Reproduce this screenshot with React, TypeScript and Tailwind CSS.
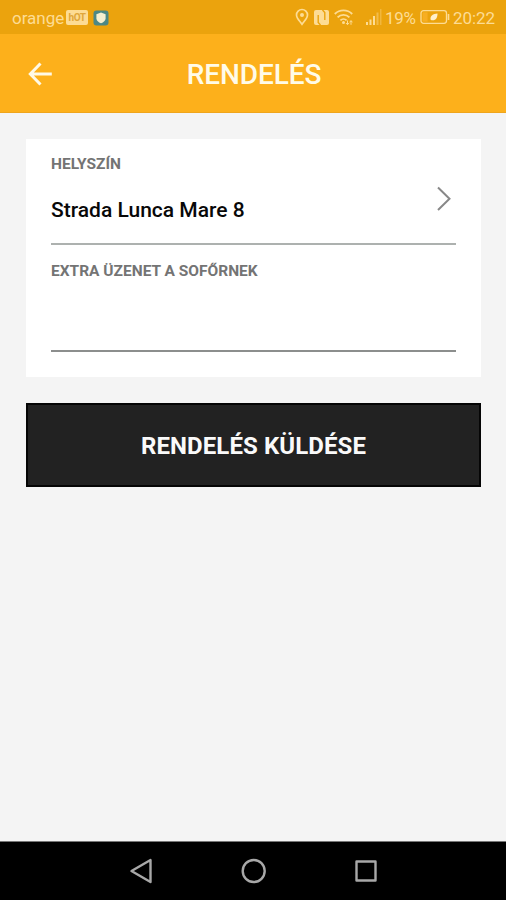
import type { ReactNode } from 'react';
import clsx from 'clsx';

function StatusBar() {
  return (
    <div className="flex h-[34px] items-center bg-[#eba30d] pl-3 pr-[11px] text-[17px] leading-[34px] text-[#fddc94]">
      <span className="w-[52px] pt-[2px]">orange</span>
      {/* carrier badge */}
      <span className="ml-[2px] mt-px flex h-[15px] w-[22px] items-center justify-center rounded-[2px] bg-[#fddc94] text-[10px] font-bold leading-none tracking-[-0.5px] text-[#e0a63a]">
        hOT
      </span>
      <svg className="ml-[5px] mt-px" width="16" height="16" viewBox="0 0 16 16">
        <rect x="0.5" y="0.5" width="15" height="15" rx="3" fill="#4d8885" />
        <path d="M8 2.6 12.6 4.2v4c0 2.4-2 4-4.6 5-2.6-1-4.6-2.6-4.6-5v-4z" fill="#f6efcf" />
      </svg>

      <div className="ml-auto flex h-[34px] items-center">
        <svg width="14" height="18" viewBox="0 0 14 18" fill="none" stroke="#fddc94">
          <path d="M7 16.2C5 13.3 1.5 10.4 1.5 7a5.5 5.5 0 0 1 11 0c0 3.4-3.5 6.3-5.5 9.2z" strokeWidth="1.7" />
          <circle cx="7" cy="7" r="2" fill="#fddc94" stroke="none" />
        </svg>
        <svg className="ml-[4px] mt-px" width="17" height="17" viewBox="0 0 17 17">
          <rect x="1" y="1" width="15" height="15" rx="2" fill="#fddc94" />
          <path d="M5.2 6v7.5L7.5 16M11.8 11V3.5L9.5 1" fill="none" stroke="#eba30d" strokeWidth="1.4" />
        </svg>
        <svg className="ml-[4px]" width="19" height="18" viewBox="0 0 19 18" fill="none" stroke="#fddc94" strokeWidth="1.9">
          <path d="M0.8 6a12.3 12.3 0 0 1 17.4 0M3.6 9.3a8.3 8.3 0 0 1 11.8 0M6.4 12.4a4.4 4.4 0 0 1 6.2 0" />
          <circle cx="9.5" cy="14.5" r="1.5" fill="#fddc94" stroke="none" />
          <path d="M13.5 12.5v4M12 15l1.5 1.7L15 15M17 16.8v-4M15.6 14.3 17 12.6l1.4 1.7" strokeWidth="1" />
        </svg>
        <svg className="ml-[12px]" width="17" height="18" viewBox="0 0 17 18" fill="#fddc94">
          <rect x="1" y="14" width="2" height="3" />
          <rect x="4.5" y="11.5" width="2" height="5.5" />
          <rect x="8" y="8" width="2" height="9" />
          <rect x="11.5" y="4.5" width="2" height="12.5" fillOpacity="0.45" />
          <rect x="15" y="1" width="1.5" height="16" fillOpacity="0.35" />
        </svg>
        <span className="ml-[3px] w-[31px] pt-[2px] tracking-[-0.3px]">19%</span>
        <svg className="ml-[4px]" width="30" height="16" viewBox="0 0 30 16">
          <rect x="1" y="1.7" width="25.5" height="12.6" rx="2.5" fill="none" stroke="#fddc94" strokeWidth="1.3" />
          <rect x="2.6" y="3.3" width="5" height="9.4" fill="#f7ae22" />
          <path d="M28.5 5v6" stroke="#fddc94" strokeWidth="1.6" />
          <path d="M10.5 10.5C10 6.5 13 5 17.5 4.5c0 4.5-2 7.5-6 6.7z" fill="#fff0cb" />
        </svg>
        <span className="ml-[3px] w-[42px] pt-[2px] tracking-[-0.1px]">20:22</span>
      </div>
    </div>
  );
}

function Header() {
  return (
    <header className="grid h-[79px] grid-cols-[80px_1fr_80px] items-center border-b border-[#efa51c] bg-[#fdb01b]">
      <button className="pl-[27px] pt-[2px]" aria-label="Vissza">
        <svg width="26" height="26" viewBox="0 0 26 26" fill="none" stroke="#fff9e6" strokeWidth="3">
          <path d="M24.8 13H3.3M13.5 2.5 3.3 13l10.2 10.5" />
        </svg>
      </button>
      <h1 className="pl-[2px] pt-[4px] text-center text-[28px] font-medium leading-8 tracking-[-0.1px] text-[#fffbe8]">
        RENDELÉS
      </h1>
    </header>
  );
}

function Field({ label, className, children }: { label: string; className: string; children?: ReactNode }) {
  return (
    <div className={clsx('border-b-2', className)}>
      <div className="text-[15.5px] font-bold leading-[18px] text-[#747474]">{label}</div>
      {children}
    </div>
  );
}

function NavBar() {
  return (
    <nav className="flex h-[59px] items-center border-t border-[#777] bg-black pl-[129px]">
      <svg width="24" height="26" viewBox="0 0 24 26" fill="none" stroke="#a8a8a8" strokeWidth="2.4" strokeLinejoin="round">
        <path d="M21.5 2v22L2.5 13z" />
      </svg>
      <svg className="ml-[88px]" width="26" height="26" viewBox="0 0 26 26" fill="none" stroke="#a8a8a8" strokeWidth="2.4">
        <circle cx="12.7" cy="13" r="11" />
      </svg>
      <svg className="ml-[88px]" width="22" height="26" viewBox="0 0 22 26" fill="none" stroke="#a8a8a8" strokeWidth="2.4" strokeLinejoin="round">
        <rect x="1.5" y="3.5" width="19" height="19" />
      </svg>
    </nav>
  );
}

export default function App() {
  return (
    <div className="flex h-[900px] w-[506px] flex-col overflow-hidden bg-[#f4f4f4] font-['Roboto',sans-serif]">
      <StatusBar />
      <Header />
      <main className="flex-1 px-[26px] pt-[26px]">
        <section className="h-[238px] w-[455px] bg-white px-[25px]">
          <Field label="HELYSZÍN" className="h-[106px] border-[#adb1af] pt-[16px]">
            <div className="flex justify-between">
              <span className="pt-[25px] text-[21px] font-medium leading-6 text-[#080808]">Strada Lunca Mare 8</span>
              <svg className="mr-[4px] mt-[13px]" width="16" height="26" viewBox="0 0 16 26" fill="none" stroke="#888" strokeWidth="2">
                <path d="M2 1.5 13.5 12.8 2 24" />
              </svg>
            </div>
          </Field>
          <Field label="EXTRA ÜZENET A SOFŐRNEK" className="h-[107px] border-[#8c8e8d] pt-[17px]" />
        </section>
        <button className="mt-[26px] h-[84px] w-[455px] border-2 border-[#050505] bg-[#222] pt-[2px] text-[24px] font-bold leading-7 tracking-[0.1px] text-[#fafafa]">
          RENDELÉS KÜLDÉSE
        </button>
      </main>
      <NavBar />
    </div>
  );
}
